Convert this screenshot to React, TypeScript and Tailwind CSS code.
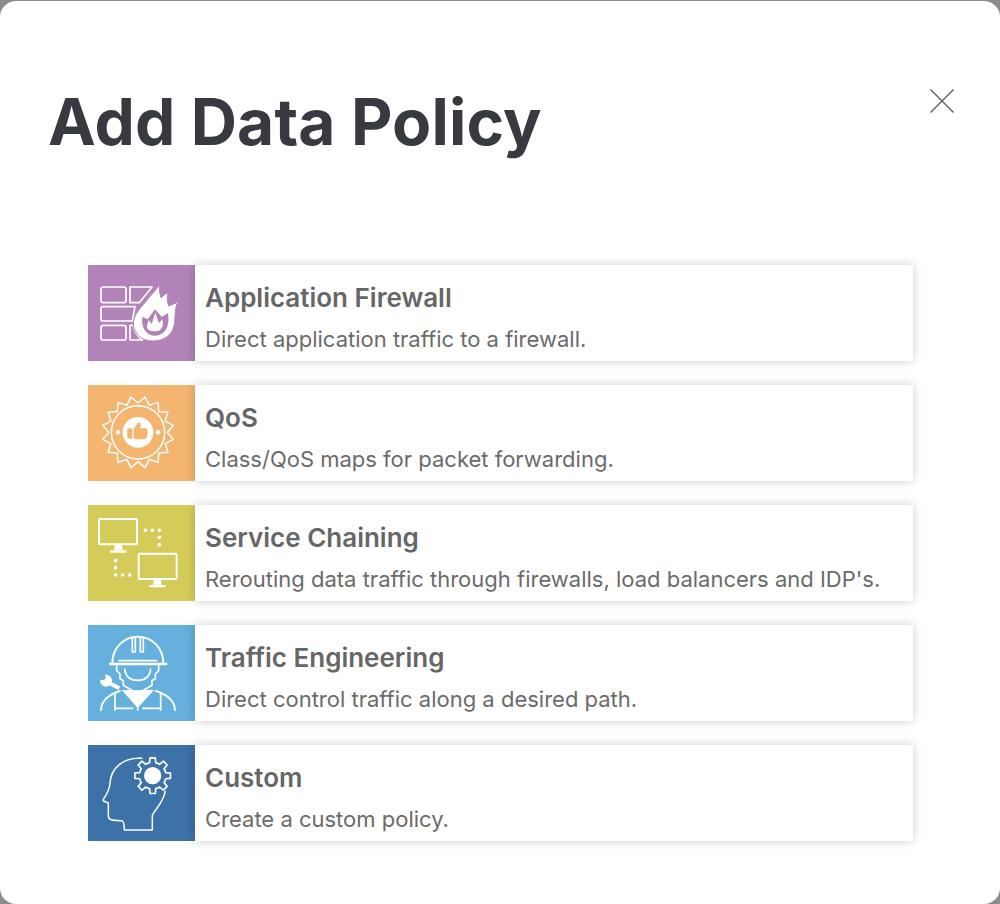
import type { ReactNode } from "react";

function burstPoints() {
  const pts: string[] = [];
  for (let i = 0; i < 32; i++) {
    const r = i % 2 === 0 ? 88 : 108;
    const a = (i * Math.PI) / 16 - Math.PI / 2;
    pts.push(`${(174 + r * Math.cos(a)).toFixed(1)},${(157 + r * Math.sin(a)).toFixed(1)}`);
  }
  return pts.join(" ");
}

function gearPoints() {
  const pts: string[] = [];
  const teeth = 8;
  for (let i = 0; i < teeth; i++) {
    const step = (2 * Math.PI) / teeth;
    const a = i * step - Math.PI / 2;
    const offs: [number, number][] = [
      [-0.5, 40],
      [-0.3, 40],
      [-0.19, 54],
      [0.19, 54],
      [0.3, 40],
    ];
    offs.forEach(([o, r]) => {
      const t = a + o * step;
      pts.push(`${(218 + r * Math.cos(t)).toFixed(1)},${(107 + r * Math.sin(t)).toFixed(1)}`);
    });
  }
  return pts.join(" ");
}

function Art({ children }: { children: ReactNode }) {
  return (
    <svg viewBox="24 15 321 288" className="h-[96px] w-[107px]" fill="none" stroke="white" strokeWidth="5" strokeLinejoin="round">
      {children}
    </svg>
  );
}

function FirewallIcon() {
  return (
    <Art>
      <rect x="63" y="81" width="75" height="47" rx="7" />
      <path d="M150 81H216L178 128H150Z" />
      <path d="M68 140H165L157 183H68Q63 183 63 178V145Q63 140 68 140Z" />
      <rect x="63" y="196" width="75" height="44" rx="7" />
      <path d="M150 196H160Q165 225 188 240H150Z" />
      <path
        d="M218 243C182 243 160 218 160 188C162 160 185 142 205 115C215 102 230 90 238 73C237 90 240 102 243 113L264 96C260 112 262 125 266 138L294 126C281 150 288 175 282 198C276 225 252 243 218 243Z"
        fill="white"
        stroke="#b283b8"
        strokeWidth="3"
      />
      <path d="M187 170L203 178L225 148L245 170L264 160C271 203 252 227 225 227C201 227 182 205 187 170Z" fill="#b283b8" stroke="none" />
      <path
        d="M204 208C198 200 203 190 206 180L215 192L226 158L237 190L247 178C252 195 246 209 236 212C225 215 211 215 204 208Z"
        fill="white"
        stroke="none"
      />
    </Art>
  );
}

function QosIcon() {
  return (
    <Art>
      <polygon points={burstPoints()} strokeWidth="4.5" />
      <circle cx="174" cy="157" r="80" strokeWidth="4.5" />
      <circle cx="174" cy="157" r="46" fill="white" stroke="none" />
      <circle cx="114" cy="157" r="7" fill="white" stroke="none" />
      <circle cx="234" cy="157" r="7" fill="white" stroke="none" />
      <rect x="142" y="145" width="15" height="31" fill="#f3b56f" stroke="none" />
      <path
        d="M161 146L174 128Q184 126 182 140L180 145H200Q205 150 202 155Q205 160 201 165Q203 170 198 174Q198 178 192 178H168L161 174Z"
        fill="#f3b56f"
        stroke="none"
      />
    </Art>
  );
}

function ChainIcon() {
  return (
    <Art>
      <rect x="57" y="57" width="114" height="76" rx="3" strokeWidth="6" />
      <path d="M105 134H125L128 150H102Z" fill="white" stroke="none" />
      <rect x="90" y="151" width="49" height="7" fill="white" stroke="none" />
      <rect x="176" y="161" width="114" height="76" rx="3" strokeWidth="6" />
      <path d="M222 238H242L245 254H219Z" fill="white" stroke="none" />
      <rect x="208" y="255" width="49" height="7" fill="white" stroke="none" />
      <g fill="white" stroke="none">
        {[
          [196, 91],
          [217, 91],
          [238, 91],
          [238, 112],
          [238, 134],
          [107, 182],
          [107, 203],
          [107, 225],
          [128, 225],
          [149, 225],
        ].map(([cx, cy]) => (
          <circle key={`${cx}-${cy}`} cx={cx} cy={cy} r="5.5" />
        ))}
      </g>
    </Art>
  );
}

function WorkerIcon() {
  return (
    <Art>
      <path d="M97 130C97 85 130 50 173 50C217 50 250 85 250 130" strokeWidth="6" />
      <path d="M87 132H262" strokeWidth="7" />
      <path d="M115 122H232" strokeWidth="5" />
      <path d="M157 52V96H166V52M181 52V96H190V52" strokeWidth="5" />
      <path d="M134 146C136 170 151 181 173 181C195 181 210 170 212 146" strokeWidth="5" />
      <path d="M110 135V152L120 162V176L130 182V196L158 212" strokeWidth="5" />
      <path d="M236 135V152L226 162V176L216 182V196L188 212" strokeWidth="5" />
      <path d="M125 210H222L173 264Z" fill="white" stroke="none" />
      <path d="M63 272C63 245 82 225 122 212M285 272C285 245 265 225 225 212" strokeWidth="6" />
      <path d="M105 222V272M242 222V272M105 265H160M187 265H242M173 262V272" strokeWidth="5" />
      <path d="M82 186L118 205" strokeWidth="12" />
      <circle cx="78" cy="182" r="18" fill="white" stroke="none" />
      <path d="M56 178L72 181L78 172L70 158L56 160Z" fill="#65b0dc" stroke="none" />
    </Art>
  );
}

function HeadIcon() {
  return (
    <Art>
      <path
        d="M187 55C130 50 92 85 90 130C89 148 84 158 70 178V183L85 189V228C85 240 95 242 125 242C131 242 133 248 133 270H217V226C226 205 250 190 256 152"
        strokeWidth="4.5"
      />
      <polygon points={gearPoints()} strokeWidth="5" />
      <circle cx="218" cy="107" r="26" fill="white" stroke="none" />
    </Art>
  );
}

const policies = [
  { title: "Application Firewall", text: "Direct application traffic to a firewall.", tile: "bg-[#b283b8]", icon: <FirewallIcon /> },
  { title: "QoS", text: "Class/QoS maps for packet forwarding.", tile: "bg-[#f3b56f]", icon: <QosIcon /> },
  { title: "Service Chaining", text: "Rerouting data traffic through firewalls, load balancers and IDP's.", tile: "bg-[#d5cb58]", icon: <ChainIcon /> },
  { title: "Traffic Engineering", text: "Direct control traffic along a desired path.", tile: "bg-[#65b0dc]", icon: <WorkerIcon /> },
  { title: "Custom", text: "Create a custom policy.", tile: "bg-[#3c72a8]", icon: <HeadIcon /> },
];

export default function App() {
  return (
    <div className="h-[904px] w-[1000px] overflow-hidden bg-[#8c8c8c] pt-px font-['Inter',sans-serif]">
      <div className="h-[903px] rounded-[16px] bg-white">
        <div className="flex items-start justify-between pl-[48px] pr-[45px] pt-[81px]">
          <h1 className="text-[64px] font-bold leading-[80px] tracking-[0.15px] text-[#373a41]">Add Data Policy</h1>
          <button className="mt-[6px] text-[#5f6062]" aria-label="Close">
            <svg width="26" height="26" viewBox="0 0 26 26" fill="none" stroke="currentColor" strokeWidth="1.4">
              <path d="M1.5 1.5L24.5 24.5M24.5 1.5L1.5 24.5" />
            </svg>
          </button>
        </div>
        <div className="mx-[88px] mt-[103px] flex w-[825px] flex-col gap-6">
          {policies.map((p) => (
            <div key={p.title} className="flex h-[96px]">
              <div className={`h-[96px] w-[107px] shrink-0 ${p.tile}`}>{p.icon}</div>
              <div className="relative flex-1 bg-white pl-[10px] pt-[16px] shadow-[0_0_10px_rgba(0,0,0,0.2)]">
                <h2 className="text-[26px] font-semibold leading-[34px] text-[#666666]">{p.title}</h2>
                <p className="mt-[10px] text-[22px] leading-[28px] text-[#6b6b6b]">{p.text}</p>
              </div>
            </div>
          ))}
        </div>
      </div>
    </div>
  );
}
